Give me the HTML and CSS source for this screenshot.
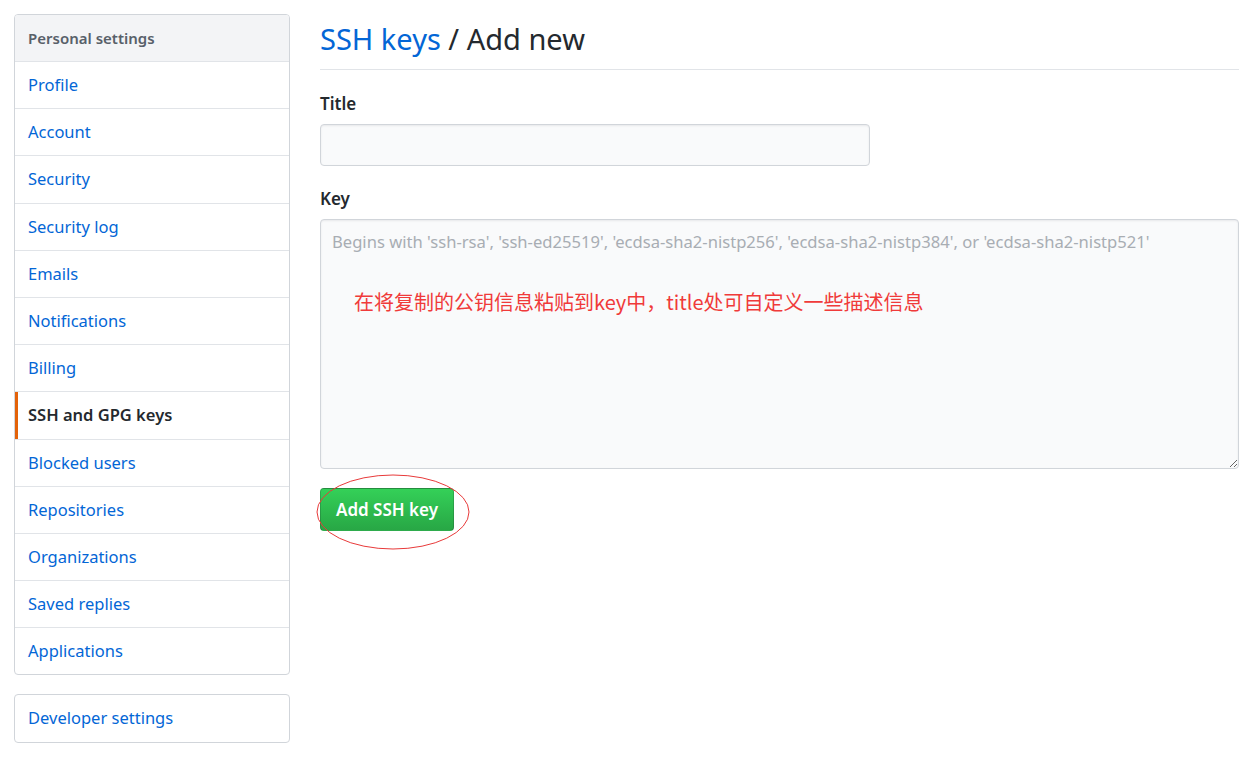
FILE: index.html
```html
<!DOCTYPE html>
<html lang="en">
<head>
  <meta charset="UTF-8" />
  <title>SSH keys / Add new</title>
  <link rel="stylesheet" href="styles.css">
</head>
<body>
  <div class="page">
    <aside class="sidebar">
      <nav class="menu">
        <div class="menu-heading">Personal settings</div>
        <a class="menu-item" href="#">Profile</a>
        <a class="menu-item" href="#">Account</a>
        <a class="menu-item" href="#">Security</a>
        <a class="menu-item" href="#">Security log</a>
        <a class="menu-item" href="#">Emails</a>
        <a class="menu-item" href="#">Notifications</a>
        <a class="menu-item" href="#">Billing</a>
        <a class="menu-item selected" href="#">SSH and GPG keys</a>
        <a class="menu-item" href="#">Blocked users</a>
        <a class="menu-item" href="#">Repositories</a>
        <a class="menu-item" href="#">Organizations</a>
        <a class="menu-item" href="#">Saved replies</a>
        <a class="menu-item" href="#">Applications</a>
      </nav>
      <nav class="menu">
        <a class="menu-item" href="#">Developer settings</a>
      </nav>
    </aside>

    <main class="content">
      <h2 class="subhead"><a href="#">SSH keys</a> / Add new</h2>
      <form class="key-form">
        <label class="field-label" for="title">Title</label>
        <input class="title-input" type="text" id="title" />
        <label class="field-label key-label" for="key">Key</label>
        <div class="key-wrap">
          <textarea id="key" class="key-input" placeholder="Begins with 'ssh-rsa', 'ssh-ed25519', 'ecdsa-sha2-nistp256', 'ecdsa-sha2-nistp384', or 'ecdsa-sha2-nistp521'"></textarea>
          <span class="note">在将复制的公钥信息粘贴到key中，title处可自定义一些描述信息</span>
        </div>
        <div class="btn-wrap">
          <button type="button" class="btn-primary">Add SSH key</button>
          <svg class="circle" width="156" height="78" viewBox="0 0 156 78">
            <ellipse cx="78" cy="39" rx="76" ry="37" fill="none" stroke="#e83a3a" stroke-width="1" />
          </svg>
        </div>
      </form>
    </main>
  </div>
</body>
</html>
```

FILE: styles.css
```css
body {
  margin: 0;
  font-family: "Noto Sans", "Open Sans", sans-serif;
  color: #24292e;
  background: #fff;
}

.page {
  display: flex;
  padding: 14px 19px 0 14px;
  gap: 30px;
}

.sidebar {
  width: 276px;
  flex-shrink: 0;
  display: flex;
  flex-direction: column;
  gap: 19px;
}

.menu {
  border: 1px solid #d1d5da;
  border-radius: 4px;
  overflow: hidden;
}

.menu-heading {
  height: 46px;
  line-height: 47px;
  padding: 0 13px;
  background: #f3f4f6;
  color: #586069;
  font-size: 15px;
  font-weight: 600;
  border-bottom: 1px solid #e1e4e8;
}

.menu-item {
  display: block;
  height: 46.2px;
  line-height: 46px;
  padding: 0 13px;
  font-size: 16.5px;
  color: #0366d6;
  text-decoration: none;
  border-bottom: 1px solid #e1e4e8;
  position: relative;
}

.menu-item:last-child {
  border-bottom: none;
}

.menu-item.selected {
  color: #24292e;
  font-weight: 600;
}

.menu-item.selected::before {
  content: "";
  position: absolute;
  left: 0;
  top: 0;
  bottom: 0;
  width: 3px;
  background: #e36209;
}

.content {
  flex: 1;
}

.subhead {
  margin: 0;
  padding: 6px 0 11px;
  font-size: 29px;
  font-weight: 400;
  line-height: 38px;
  border-bottom: 1px solid #e1e4e8;
}

.subhead a {
  color: #0366d6;
  text-decoration: none;
}

.key-form {
  display: flex;
  flex-direction: column;
  align-items: flex-start;
}

.field-label {
  font-size: 17px;
  font-weight: 600;
  margin: 22px 0 8px;
  line-height: 24px;
}

.key-label {
  margin-top: 21px;
}

.title-input {
  width: 550px;
  height: 42px;
  box-sizing: border-box;
  border: 1px solid #d1d5da;
  border-radius: 4px;
  background: #f9fafb;
  box-shadow: inset 0 1px 2px rgba(27,31,35,0.075);
}

.key-wrap {
  position: relative;
  width: 919px;
}

.key-input {
  display: block;
  width: 100%;
  height: 250px;
  box-sizing: border-box;
  padding: 10px 11px;
  font-family: inherit;
  font-size: 16.6px;
  border: 1px solid #d1d5da;
  border-radius: 4px;
  background: #f9fafb;
  box-shadow: inset 0 1px 2px rgba(27,31,35,0.075);
  resize: vertical;
}

.key-input::placeholder {
  color: #a8adb3;
}

.note {
  position: absolute;
  left: 34px;
  top: 68px;
  font-size: 20px;
  color: #f03a3a;
  font-family: "Noto Sans CJK SC", "Noto Sans", sans-serif;
}

.btn-wrap {
  position: relative;
  margin-top: 19px;
}

.btn-primary {
  height: 43px;
  width: 134px;
  padding: 0;
  font-family: inherit;
  font-size: 17px;
  font-weight: 600;
  color: #fff;
  background: linear-gradient(#34d058, #28a745);
  border: 1px solid rgba(27,31,35,0.2);
  border-radius: 4px;
  cursor: pointer;
}

.circle {
  position: absolute;
  left: -5px;
  top: -15px;
  pointer-events: none;
}
```
